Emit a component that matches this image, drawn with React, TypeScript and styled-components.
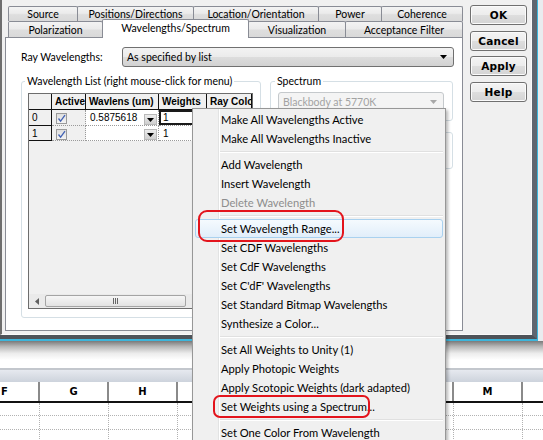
import React from "react";
import styled, { createGlobalStyle } from "styled-components";

const UI = `Lato, "Liberation Sans", Arial, sans-serif`;
const BOLD = `"Liberation Sans", Arial, sans-serif`;
const BTN = `"DejaVu Sans", Verdana, sans-serif`;

const GlobalStyle = createGlobalStyle`
  html, body { margin: 0; padding: 0; background: #fff; }
  body { width: 543px; height: 440px; overflow: hidden; font-family: ${UI}; }
  *, *::before, *::after { box-sizing: border-box; }
`;

const Screen = styled.div`
  position: relative;
  width: 543px;
  height: 440px;
  overflow: hidden;
  display: flex;
  flex-direction: column;
  background: #fff;
  font-family: ${UI};
  color: #000;
`;

const DialogRow = styled.div`
  display: flex;
  height: 341px;
  flex: none;
  background: #e9ecef;
`;

const DialogOuter = styled.div`
  width: 538px;
  height: 341px;
  display: flex;
  border-right: 1px solid #3db6dc;
  border-bottom: 2px solid #3db6dc;
`;

const DialogFrame = styled.div`
  flex: 1;
  display: flex;
  border-right: 5px solid #5f6670;
  border-bottom: 4px solid #4e5359;
`;

const DialogBody = styled.div`
  flex: 1;
  display: flex;
  align-items: flex-start;
  background: #f0f0f0;
  border-left: 2px solid #6e6e6e;
  border-right: 1px solid #fafafa;
  border-bottom: 1px solid #fafafa;
  padding: 5px 0 0 3px;
`;

const TabControl = styled.div`
  width: 458px;
  display: flex;
  flex-direction: column;
`;

const TabRow = styled.div<{ $first?: boolean }>`
  display: flex;
  align-items: flex-end;
  height: ${(p) => (p.$first ? 15 : 16)}px;
  margin-top: ${(p) => (p.$first ? 1 : 0)}px;
  padding-left: 3px;
`;

const Tab = styled.div<{ $w: number; $sel?: boolean; $h: number }>`
  flex: none;
  width: ${(p) => p.$w}px;
  height: ${(p) => (p.$sel ? p.$h + 3 : p.$h)}px;
  margin-left: -1px;
  margin-bottom: ${(p) => (p.$sel ? -1 : 0)}px;
  &:first-child { margin-left: 0; }
  border: 1px solid #898c95;
  border-bottom: none;
  border-radius: 2px 2px 0 0;
  background: ${(p) =>
    p.$sel ? "#fff" : "linear-gradient(#f3f3f3 0%, #ebebeb 45%, #dedede 55%, #d9d9d9 100%)"};
  position: ${(p) => (p.$sel ? "relative" : "static")};
  z-index: ${(p) => (p.$sel ? 2 : "auto")};
  display: flex;
  align-items: center;
  justify-content: center;
  padding-bottom: ${(p) => (p.$sel ? 3 : 0)}px;
  font-size: 10.5px;
  white-space: nowrap;
`;

const Panel = styled.div`
  height: 294px;
  border: 1px solid #898c95;
  background: #fff;
  padding: 9px 8px 0 15px;
  display: flex;
  flex-direction: column;
`;

const RayRow = styled.div`
  display: flex;
  align-items: center;
  height: 20px;
`;

const FieldLabel = styled.div`
  width: 101px;
  font-size: 10.5px;
`;

const Combo = styled.div<{ $disabled?: boolean; $h?: number }>`
  flex: 1;
  height: ${(p) => p.$h ?? 20}px;
  display: flex;
  align-items: center;
  justify-content: space-between;
  padding: 0 6px 0 4px;
  border: 1px solid ${(p) => (p.$disabled ? "#c5c9cc" : "#707070")};
  border-radius: 3px;
  background: ${(p) =>
    p.$disabled ? "#f4f4f4" : "linear-gradient(#f3f3f3 0%, #ebebeb 50%, #dddddd 50%, #d2d2d2 100%)"};
  color: ${(p) => (p.$disabled ? "#a3a3a3" : "#000")};
  font-size: 10.5px;
`;

const Arrow = ({ color = "#000" }: { color?: string }) => (
  <svg width="7" height="4" viewBox="0 0 7 4">
    <path d="M0 0H7L3.5 4Z" fill={color} />
  </svg>
);

const GroupsRow = styled.div`
  display: flex;
  align-items: flex-start;
  margin-top: 8px;
`;

const Group = styled.fieldset<{ $w: number; $pad: string }>`
  margin: 0;
  min-width: 0;
  width: ${(p) => p.$w}px;
  padding: ${(p) => p.$pad};
  border: 1px solid #d5dfe5;
  border-radius: 3px;
`;

const Legend = styled.legend`
  margin-left: -3px;
  padding: 0 2px;
  font-size: 10.5px;
  line-height: 12px;
`;

const RightCol = styled.div`
  width: 183px;
  margin-left: 9px;
  display: flex;
  flex-direction: column;
`;

const PlainBox = styled.div`
  margin-top: 11px;
  height: 37px;
  border: 1px solid #d5dfe5;
  border-radius: 3px;
`;

const Grid = styled.div`
  width: 225px;
  height: 216px;
  border: 1px solid #6d6d6d;
  background: #f0f0f0;
  display: flex;
  flex-direction: column;
  overflow: hidden;
`;

const Table = styled.div`
  display: grid;
  grid-template-columns: 23px 34px 73px 48px 45px;
  grid-template-rows: 16px 16px 15px;
`;

const HeadCell = styled.div`
  border-right: 1px solid #111;
  border-bottom: 1px solid #111;
  padding-left: 3px;
  display: flex;
  align-items: center;
  font: bold 10px ${BOLD};
  white-space: nowrap;
  overflow: hidden;
`;

const RowHead = styled.div`
  border-right: 1px solid #111;
  border-bottom: 1px solid #111;
  padding-left: 3px;
  display: flex;
  align-items: center;
  font: 10px ${BOLD};
`;

const Cell = styled.div<{ $white?: boolean; $focus?: boolean }>`
  border-right: 1px dotted #9a9a9a;
  border-bottom: 1px dotted #9a9a9a;
  background: ${(p) => (p.$white ? "#fff" : "transparent")};
  box-shadow: ${(p) => (p.$focus ? "inset 0 0 0 2px #1a1a1a" : "none")};
  display: flex;
  align-items: center;
  justify-content: space-between;
  padding-left: 4px;
  font: 10px ${BOLD};
  overflow: hidden;
`;

const Check = styled.div`
  width: 11px;
  height: 11px;
  margin-top: 2px;
  border: 1px solid #9a9a9a;
  background: linear-gradient(#dedede, #f4f4f4);
  display: flex;
  align-items: center;
  justify-content: center;
`;

const CheckBox = () => (
  <Check>
    <svg width="9" height="9" viewBox="0 0 9 9">
      <path d="M1.5 4.5L3.6 7.2L8 1.2" fill="none" stroke="#4262b4" strokeWidth="1.3" />
    </svg>
  </Check>
);

const DropBtn = styled.div`
  width: 13px;
  height: 11px;
  margin: 3px 1px 0 0;
  background: linear-gradient(#ececec, #cfcfcf);
  border: 1px solid #b9b9b9;
  display: flex;
  align-items: flex-end;
  justify-content: center;
  padding-bottom: 2px;
`;

const Filler = styled.div`
  flex: 1;
`;

const HScroll = styled.div`
  height: 14px;
  display: flex;
  align-items: stretch;
  background: #eaeaea;
  padding: 1px 0;
`;

const ScrollArrow = styled.div`
  width: 16px;
  display: flex;
  align-items: center;
  justify-content: center;
`;

const Thumb = styled.div`
  width: 141px;
  border: 1px solid #a4a4a4;
  border-radius: 2px;
  background: linear-gradient(#f6f6f6, #e2e2e2);
  display: flex;
  align-items: center;
  justify-content: center;
  gap: 1px;
`;

const Grip = styled.span`
  width: 1px;
  height: 6px;
  background: #666;
`;

const ButtonCol = styled.div`
  margin-left: 7px;
  display: flex;
  flex-direction: column;
  gap: 5.7px;
`;

const Btn = styled.div`
  width: 57px;
  height: 20px;
  border: 1px solid #707070;
  border-radius: 3px;
  background: linear-gradient(#f4f4f4 0%, #ececec 50%, #dedede 50%, #d4d4d4 100%);
  box-shadow: inset 0 0 0 1px #fbfbfb;
  display: flex;
  align-items: center;
  justify-content: center;
  font: bold 10.5px ${BTN};
  letter-spacing: 0.2px;
`;

/* ---------- Spreadsheet behind ---------- */

const Sheet = styled.div`
  flex: 1;
  display: flex;
  flex-direction: column;
  background: #fff;
  overflow: hidden;
`;

const SheetShadow = styled.div`
  height: 19px;
  flex: none;
  background: linear-gradient(#7a7a7a 0%, #b9b9b9 30%, #ececec 65%, #fff 100%);
`;

const SheetGap = styled.div`
  height: 8px;
  flex: none;
`;

const SheetRule = styled.div`
  height: 2px;
  flex: none;
  background: #c3c7cd;
`;

const SheetBand = styled.div`
  height: 12px;
  flex: none;
  background: linear-gradient(#e6e9ef, #cdd3dc);
`;

const ColHeaders = styled.div`
  display: flex;
  flex: none;
  height: 21px;
  margin-left: -29px;
  border-bottom: 2px solid #111;
  background: #fff;
`;

const ColHead = styled.div`
  flex: none;
  width: 69px;
  border-right: 2px solid #8a8a8a;
  display: flex;
  align-items: center;
  justify-content: center;
  font: bold 10px ${BTN};
`;

const SheetRow = styled.div<{ $h: number }>`
  display: flex;
  flex: none;
  height: ${(p) => p.$h}px;
  margin-left: -29px;
  border-bottom: 1px dotted #b2b2b2;
`;

const SheetCell = styled.div`
  flex: none;
  width: 69px;
  border-right: 1px dotted #b2b2b2;
`;

/* ---------- Context menu (overlay) ---------- */

const Menu = styled.div`
  position: absolute;
  left: 192px;
  top: 108px;
  width: 254px;
  height: 345px;
  border: 1px solid #979797;
  box-shadow: 2px 2px 3px rgba(0, 0, 0, 0.28);
  padding: 1px 0;
  background: linear-gradient(
    to right,
    #f0f0f0 25px,
    #e2e3e3 25px,
    #e2e3e3 26px,
    #ffffff 26px,
    #ffffff 27px,
    #f0f0f0 27px
  );
  font-family: ${UI};
  font-size: 11.2px;
  z-index: 10;
`;

const MenuItem = styled.div<{ $hot?: boolean; $disabled?: boolean }>`
  position: relative;
  height: 19px;
  display: flex;
  align-items: center;
  white-space: nowrap;
  padding-left: ${(p) => (p.$hot ? 25 : 28)}px;
  margin: ${(p) => (p.$hot ? "0 2px" : "0")};
  border: ${(p) => (p.$hot ? "1px solid #a9d1ef" : "none")};
  border-radius: 3px;
  background: ${(p) => (p.$hot ? "linear-gradient(#f5fafe, #e1eefa)" : "transparent")};
  color: ${(p) => (p.$disabled ? "#8d8d8d" : "#000")};
`;

const MenuSep = styled.div`
  height: 7px;
  margin: 0 2px 0 27px;
  display: flex;
  align-items: center;
  &::after {
    content: "";
    flex: 1;
    height: 2px;
    border-top: 1px solid #e0e0e0;
    border-bottom: 1px solid #ffffff;
  }
`;

const Ring = styled.span<{ $l: number; $t: number; $w: number; $h: number; $r: number }>`
  position: absolute;
  left: ${(p) => p.$l}px;
  top: ${(p) => p.$t}px;
  width: ${(p) => p.$w}px;
  height: ${(p) => p.$h}px;
  border: 2px solid #e3141c;
  border-radius: ${(p) => p.$r}px;
  pointer-events: none;
`;

type Entry =
  | "sep"
  | { t: string; disabled?: boolean; hot?: boolean; ring?: "a" | "b" };

const entries: Entry[] = [
  { t: "Make All Wavelengths Active" },
  { t: "Make All Wavelengths Inactive" },
  "sep",
  { t: "Add Wavelength" },
  { t: "Insert Wavelength" },
  { t: "Delete Wavelength", disabled: true },
  "sep",
  { t: "Set Wavelength Range...", hot: true, ring: "a" },
  { t: "Set CDF Wavelengths" },
  { t: "Set CdF Wavelengths" },
  { t: "Set C'dF' Wavelengths" },
  { t: "Set Standard Bitmap Wavelengths" },
  { t: "Synthesize a Color..." },
  "sep",
  { t: "Set All Weights to Unity (1)" },
  { t: "Apply Photopic Weights" },
  { t: "Apply Scotopic Weights (dark adapted)" },
  { t: "Set Weights using a Spectrum...", ring: "b" },
  "sep",
  { t: "Set One Color From Wavelength" },
];

const row1 = [
  { t: "Source", w: 70 },
  { t: "Positions/Directions", w: 117 },
  { t: "Location/Orientation", w: 126 },
  { t: "Power", w: 64 },
  { t: "Coherence", w: 82 },
];
const row2 = [
  { t: "Polarization", w: 95 },
  { t: "Wavelengths/Spectrum", w: 147, sel: true },
  { t: "Visualization", w: 98 },
  { t: "Acceptance Filter", w: 118 },
];

const columns = ["F", "G", "H", "", "", "", "", "M", ""];

export default function App() {
  return (
    <Screen>
      <GlobalStyle />
      <DialogRow>
        <DialogOuter>
          <DialogFrame>
            <DialogBody>
              <TabControl>
                <TabRow $first>
                  {row1.map((t) => (
                    <Tab key={t.t} $w={t.w} $h={15}>
                      {t.t}
                    </Tab>
                  ))}
                </TabRow>
                <TabRow>
                  {row2.map((t) => (
                    <Tab key={t.t} $w={t.w} $h={16} $sel={t.sel}>
                      {t.t}
                    </Tab>
                  ))}
                </TabRow>
                <Panel>
                  <RayRow>
                    <FieldLabel>Ray Wavelengths:</FieldLabel>
                    <Combo>
                      <span>As specified by list</span>
                      <Arrow />
                    </Combo>
                  </RayRow>
                  <GroupsRow>
                    <Group $w={240} $pad="6px 7px 8px 6px">
                      <Legend>Wavelength List (right mouse-click for menu)</Legend>
                      <Grid>
                        <Table>
                          <HeadCell />
                          <HeadCell>Active</HeadCell>
                          <HeadCell>Wavlens (um)</HeadCell>
                          <HeadCell>Weights</HeadCell>
                          <HeadCell>Ray Colo</HeadCell>

                          <RowHead>0</RowHead>
                          <Cell>
                            <CheckBox />
                          </Cell>
                          <Cell $white>
                            <span>0.5875618</span>
                            <DropBtn>
                              <Arrow />
                            </DropBtn>
                          </Cell>
                          <Cell $white $focus>
                            1
                          </Cell>
                          <Cell $white />

                          <RowHead>1</RowHead>
                          <Cell>
                            <CheckBox />
                          </Cell>
                          <Cell $white>
                            <span />
                            <DropBtn>
                              <Arrow />
                            </DropBtn>
                          </Cell>
                          <Cell $white>1</Cell>
                          <Cell $white />
                        </Table>
                        <Filler />
                        <HScroll>
                          <ScrollArrow>
                            <svg width="4" height="7" viewBox="0 0 4 7">
                              <path d="M4 0V7L0 3.5Z" fill="#606060" />
                            </svg>
                          </ScrollArrow>
                          <Thumb>
                            <Grip />
                            <Grip />
                            <Grip />
                          </Thumb>
                        </HScroll>
                      </Grid>
                    </Group>
                    <RightCol>
                      <Group $w={183} $pad="5px 8px 9px 7px">
                        <Legend>Spectrum</Legend>
                        <Combo $disabled $h={19}>
                          <span>Blackbody at 5770K</span>
                          <Arrow color="#a8a8a8" />
                        </Combo>
                      </Group>
                      <PlainBox />
                    </RightCol>
                  </GroupsRow>
                </Panel>
              </TabControl>
              <ButtonCol>
                <Btn>OK</Btn>
                <Btn>Cancel</Btn>
                <Btn>Apply</Btn>
                <Btn>Help</Btn>
              </ButtonCol>
            </DialogBody>
          </DialogFrame>
        </DialogOuter>
      </DialogRow>

      <Sheet>
        <SheetShadow />
        <SheetGap />
        <SheetRule />
        <SheetBand />
        <ColHeaders>
          {columns.map((c, i) => (
            <ColHead key={i}>{c}</ColHead>
          ))}
        </ColHeaders>
        {[13, 14, 14].map((h, r) => (
          <SheetRow key={r} $h={h}>
            {columns.map((_, i) => (
              <SheetCell key={i} />
            ))}
          </SheetRow>
        ))}
      </Sheet>

      <Menu>
        {entries.map((e, i) =>
          e === "sep" ? (
            <MenuSep key={i} />
          ) : (
            <MenuItem key={i} $hot={e.hot} $disabled={e.disabled}>
              {e.t}
              {e.ring === "a" && <Ring $l={2} $t={-10} $w={146} $h={32} $r={9} />}
              {e.ring === "b" && <Ring $l={20} $t={-2} $w={157} $h={23} $r={7} />}
            </MenuItem>
          )
        )}
      </Menu>
    </Screen>
  );
}
